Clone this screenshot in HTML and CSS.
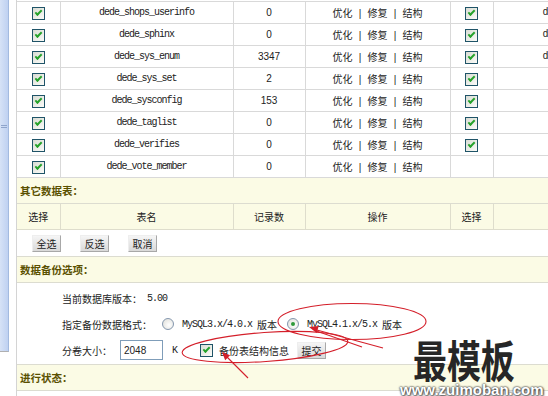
FILE: index.html
```html
<!DOCTYPE html>
<html lang="zh-CN">
<head>
  <meta charset="UTF-8">
  <title>数据库备份</title>
  <link rel="stylesheet" href="styles.css">
</head>
<body>
  <div class="page">
    <!-- left frame strip -->
    <div class="sidebar"></div>

    <div class="main">
      <!-- system tables -->
      <table class="list">
        <colgroup>
          <col class="c-sel"><col class="c-name"><col class="c-num"><col class="c-op"><col class="c-sel2"><col class="c-rest">
        </colgroup>
        <tr>
          <td><span class="cb"></span></td>
          <td class="mono">dede_shops_userinfo</td>
          <td class="num">0</td>
          <td>优化<span class="sep">|</span>修复<span class="sep">|</span>结构</td>
          <td><span class="cb"></span></td>
          <td class="rest mono">dede_shops_userinfo</td>
        </tr>
        <tr>
          <td><span class="cb"></span></td>
          <td class="mono">dede_sphinx</td>
          <td class="num">0</td>
          <td>优化<span class="sep">|</span>修复<span class="sep">|</span>结构</td>
          <td><span class="cb"></span></td>
          <td class="rest mono">dede_sphinx</td>
        </tr>
        <tr>
          <td><span class="cb"></span></td>
          <td class="mono">dede_sys_enum</td>
          <td class="num">3347</td>
          <td>优化<span class="sep">|</span>修复<span class="sep">|</span>结构</td>
          <td><span class="cb"></span></td>
          <td class="rest mono">dede_sys_enum</td>
        </tr>
        <tr>
          <td><span class="cb"></span></td>
          <td class="mono">dede_sys_set</td>
          <td class="num">2</td>
          <td>优化<span class="sep">|</span>修复<span class="sep">|</span>结构</td>
          <td><span class="cb"></span></td>
          <td class="rest"></td>
        </tr>
        <tr>
          <td><span class="cb"></span></td>
          <td class="mono">dede_sysconfig</td>
          <td class="num">153</td>
          <td>优化<span class="sep">|</span>修复<span class="sep">|</span>结构</td>
          <td><span class="cb"></span></td>
          <td class="rest"></td>
        </tr>
        <tr>
          <td><span class="cb"></span></td>
          <td class="mono">dede_taglist</td>
          <td class="num">0</td>
          <td>优化<span class="sep">|</span>修复<span class="sep">|</span>结构</td>
          <td><span class="cb"></span></td>
          <td class="rest"></td>
        </tr>
        <tr>
          <td><span class="cb"></span></td>
          <td class="mono">dede_verifies</td>
          <td class="num">0</td>
          <td>优化<span class="sep">|</span>修复<span class="sep">|</span>结构</td>
          <td><span class="cb"></span></td>
          <td class="rest"></td>
        </tr>
        <tr>
          <td><span class="cb"></span></td>
          <td class="mono">dede_vote_member</td>
          <td class="num">0</td>
          <td>优化<span class="sep">|</span>修复<span class="sep">|</span>结构</td>
          <td></td>
          <td class="rest"></td>
        </tr>
      </table>

      <div class="bar">其它数据表：</div>

      <table class="list head">
        <colgroup>
          <col class="c-sel"><col class="c-name"><col class="c-num"><col class="c-op"><col class="c-sel2"><col class="c-rest">
        </colgroup>
        <tr>
          <th>选择</th>
          <th>表名</th>
          <th>记录数</th>
          <th>操作</th>
          <th>选择</th>
          <th></th>
        </tr>
      </table>

      <div class="actions">
        <button class="btn">全选</button>
        <button class="btn">反选</button>
        <button class="btn">取消</button>
      </div>

      <div class="bar">数据备份选项：</div>

      <div class="options">
        <div class="opt-row">
          <span>当前数据库版本：</span>
          <span class="mono ver">5.00</span>
        </div>
        <div class="opt-row">
          <span>指定备份数据格式：</span>
          <span class="radio"></span>
          <span class="mono">MySQL3.x/4.0.x</span>
          <span class="lbl">版本</span>
          <span class="radio on"></span>
          <span class="mono">MySQL4.1.x/5.x</span>
          <span class="lbl">版本</span>
        </div>
        <div class="opt-row">
          <span>分卷大小：</span>
          <span class="field">2048</span>
          <span class="mono unit">K</span>
          <span class="cb"></span>
          <span class="cb-label">备份表结构信息</span>
          <button class="btn submit">提交</button>
        </div>
      </div>

      <div class="bar">进行状态：</div>
    </div>

    <!-- hand-drawn red marks over the form -->
    <svg class="marks" width="548" height="396" viewBox="0 0 548 396">
      <g fill="none" stroke="#d41f2a" stroke-width="1.1">
        <ellipse cx="352" cy="321.5" rx="74" ry="18"/>
        <ellipse cx="265" cy="347" rx="83" ry="14.5" transform="rotate(-4 265 347)"/>
        <line x1="315" y1="329.5" x2="383" y2="348"/>
        <line x1="315" y1="330.5" x2="362" y2="347"/>
        <line x1="226" y1="356" x2="248" y2="378"/>
      </g>
      <g fill="#d41f2a">
        <polygon points="309,327 318.7,326.1 316.7,332.9"/>
        <polygon points="222,352 230.1,355.2 225.2,360.2"/>
      </g>
    </svg>

    <div class="watermark">
      <span class="wm-title">最模板</span>
      <span class="wm-url">www.zuimoban.com</span>
    </div>
  </div>
</body>
</html>
```

FILE: styles.css
```css
/* Reset */
html, body {
  margin: 0;
  padding: 0;
  background: #fff;
  overflow: hidden;
}
body {
  font-family: "Noto Sans CJK SC", sans-serif;
  font-size: 10px;
  color: #222;
}
.page {
  display: flex;
  align-items: flex-start;
  width: 548px;
  height: 396px;
  position: relative;
  overflow: hidden;
}
/* Left frame strip */
.sidebar {
  flex: none;
  width: 8px;
  height: 351px;
  background: linear-gradient(to right, #d6e2f6, #bfd1f1);
  border-right: 1px solid #a3badf;
  border-bottom: 1px solid #b0b0b0;
  position: relative;
}
.sidebar::before {
  content: "";
  position: absolute;
  left: 1px; top: 125px;
  width: 6px; height: 1px;
  background: #8fa5cc;
  box-shadow: 0 2px 0 #8fa5cc;
}
.main {
  flex: none;
  width: 700px;
  height: 396px;
  margin-left: 7px;
  border-left: 1px solid #d4d4d4;
}
/* Tables */
.list {
  border-collapse: collapse;
  table-layout: fixed;
  width: 700px;
}
.list:first-child { margin-top: 1px; }
.c-sel { width: 43px; }
.c-name { width: 173px; }
.c-num { width: 72px; }
.c-op { width: 145px; }
.c-sel2 { width: 43px; }
.c-rest { width: 224px; }
.list td, .list th {
  height: 21px;
  padding: 0;
  border: 1px solid #d9d9d9;
  text-align: center;
  white-space: nowrap;
  overflow: hidden;
}
.list td:first-child, .list th:first-child { border-left: 0; }
.list tr:first-child td { border-top: 1px solid #d9d9d9; }
.list.head th {
  height: 25px;
  border-top: 0;
  font-weight: normal;
  background: #fbfbe5;
  border-color: #deddcc;
}
.mono {
  font-family: "Liberation Mono", monospace;
  letter-spacing: -1px;
  font-size: 10px;
}
.num { font-family: "Liberation Sans", sans-serif; }
.sep {
  display: inline-block;
  width: 15px;
  font-family: "Liberation Sans", sans-serif;
}
.list td.rest {
  text-align: left;
  padding-left: 49px;
}
/* Checkbox */
.cb {
  display: inline-block;
  flex: none;
  width: 11px;
  height: 11px;
  border: 1px solid #1f5468;
  background: linear-gradient(135deg, #d9dcd4, #fbfbf8);
  position: relative;
  vertical-align: middle;
}
.cb::after {
  content: "";
  position: absolute;
  left: 2px; top: 2px;
  width: 5px; height: 2px;
  border-left: 2px solid #25a22a;
  border-bottom: 2px solid #25a22a;
  transform: rotate(-45deg);
}
/* Section bars */
.bar {
  height: 25px;
  line-height: 25px;
  padding-left: 3px;
  background: #fbfbe5;
  border-bottom: 1px solid #dcdcd0;
  font-size: 10.5px;
  font-weight: bold;
  color: #5a5000;
}
.actions {
  height: 26px;
  display: flex;
  align-items: center;
  gap: 19px;
  padding-left: 15px;
  border-bottom: 1px solid #dcdcd0;
}
.btn {
  width: 29px;
  height: 17px;
  padding: 0;
  font-family: "Noto Sans CJK SC", sans-serif;
  font-size: 10px;
  line-height: 15px;
  color: #222;
  border: 1px solid;
  border-color: #eeeeee #a8a8a8 #a8a8a8 #eeeeee;
  background: linear-gradient(#f5f5f5, #d9d9d9);
}
/* Backup options */
.options {
  height: 78px;
  padding: 2px 0 1px 45px;
  border-bottom: 1px solid #dcdcd0;
}
.opt-row {
  height: 26px;
  display: flex;
  align-items: center;
  white-space: nowrap;
}
.ver { margin-left: 5px; }
.lbl { margin-left: 5px; }
.radio {
  flex: none;
  width: 10px;
  height: 10px;
  border: 1px solid #8497ae;
  border-radius: 50%;
  background: radial-gradient(circle at 60% 60%, #fff, #dcdcd6);
  margin: 0 8px 0 10px;
  position: relative;
}
.radio.on::after {
  content: "";
  position: absolute;
  left: 3px; top: 3px;
  width: 4px; height: 4px;
  border-radius: 50%;
  background: #2f9a3a;
}
.field {
  width: 38px;
  height: 18px;
  line-height: 19px;
  margin-left: 8px;
  padding-left: 3px;
  border: 1px solid #7f9db9;
  font-family: "Liberation Sans", sans-serif;
}
.unit { margin: 0 23px 0 9px; }
.cb-label { margin-left: 6px; }
.submit { margin-left: 8px; }
/* Overlays */
.marks {
  position: absolute;
  top: 0; left: 0;
  pointer-events: none;
}
.watermark {
  position: absolute;
  left: 400px; top: 337px;
  width: 148px;
  pointer-events: none;
}
.wm-title {
  display: block;
  margin-left: 13px;
  font-size: 44px;
  line-height: 44px;
  font-weight: bold;
  color: #262626;
  transform: scaleX(0.77);
  transform-origin: left center;
}
.wm-url {
  position: absolute;
  left: 0; top: 45px;
  font-family: "Liberation Sans", sans-serif;
  font-size: 15px;
  line-height: 15px;
  font-weight: bold;
  color: #fff;
  text-shadow: 0 0 2px #444, 0 0 2px #444, 1px 1px 2px #666;
}
```
